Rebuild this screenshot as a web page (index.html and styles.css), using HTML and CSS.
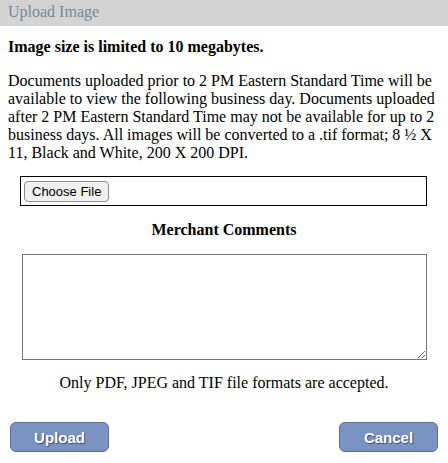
FILE: index.html
```html
<!DOCTYPE html>
<html>
<head>
<meta charset="utf-8">
<link rel="stylesheet" href="styles.css">
</head>
<body>
<div class="titlebar">Upload Image</div>
<div class="content">
  <p class="limit">Image size is limited to 10 megabytes.</p>
  <p class="info">Documents uploaded prior to 2 PM Eastern Standard Time will be available to view the following business day. Documents uploaded after 2 PM Eastern Standard Time may not be available for up to 2 business days. All images will be converted to a .tif format; 8 ½ X 11, Black and White, 200 X 200 DPI.</p>
  <div class="filebox"><button class="choose" type="button">Choose File</button></div>
  <div class="label">Merchant Comments</div>
  <div class="comments-wrap"><textarea class="comments"></textarea></div>
  <div class="note">Only PDF, JPEG and TIF file formats are accepted.</div>
  <div class="actions">
    <button class="btn" type="button">Upload</button>
    <button class="btn" type="button">Cancel</button>
  </div>
</div>
</body>
</html>
```
FILE: styles.css
```css
html, body {
  margin: 0;
  padding: 0;
  background: #ffffff;
}
body {
  font-family: "Liberation Serif", "Times New Roman", serif;
  font-size: 16px;
  color: #000000;
}
.titlebar {
  height: 26px;
  line-height: 24px;
  background: #d3d3d3;
  color: #778899;
  padding-left: 8px;
  font-size: 16px;
}
.content {
  padding: 0 8px;
}
.limit {
  margin: 12px 0 0 0;
  font-weight: bold;
}
.info {
  margin: 16px 0 0 0;
}
.filebox {
  margin: 14px 13px 0 12px;
  height: 28px;
  border: 1px solid #000000;
  display: flex;
  align-items: center;
  padding-left: 3px;
}
.choose {
  font-family: "Liberation Sans", Arial, sans-serif;
  font-size: 13px;
  height: 21px;
  padding: 0 7px;
  background: #f0f0f0;
  border: 1px solid #8c8c8c;
  border-radius: 4px;
  color: #000000;
  margin: 0;
  line-height: 19px;
}
.label {
  margin-top: 15px;
  text-align: center;
  font-weight: bold;
}
.comments-wrap {
  margin: 15px 13px 0 14px;
  height: 106px;
  display: flex;
}
.comments {
  flex: 1;
  margin: 0;
  border: 1px solid #767676;
  border-radius: 0;
  resize: both;
  padding: 2px;
  box-sizing: border-box;
  height: 106px;
}
.note {
  margin-top: 14px;
  text-align: center;
}
.actions {
  margin: 30px 2px 0 2px;
  display: flex;
  justify-content: space-between;
}
.btn {
  width: 99px;
  height: 30px;
  background: #7b93c3;
  border: 1px solid #5a6c9c;
  border-radius: 6px;
  color: #ffffff;
  font-family: "Liberation Sans", Arial, sans-serif;
  font-weight: bold;
  font-size: 15px;
  text-shadow: 1px 1px 1px #3a4a70;
  padding: 0;
  margin: 0;
}
```
